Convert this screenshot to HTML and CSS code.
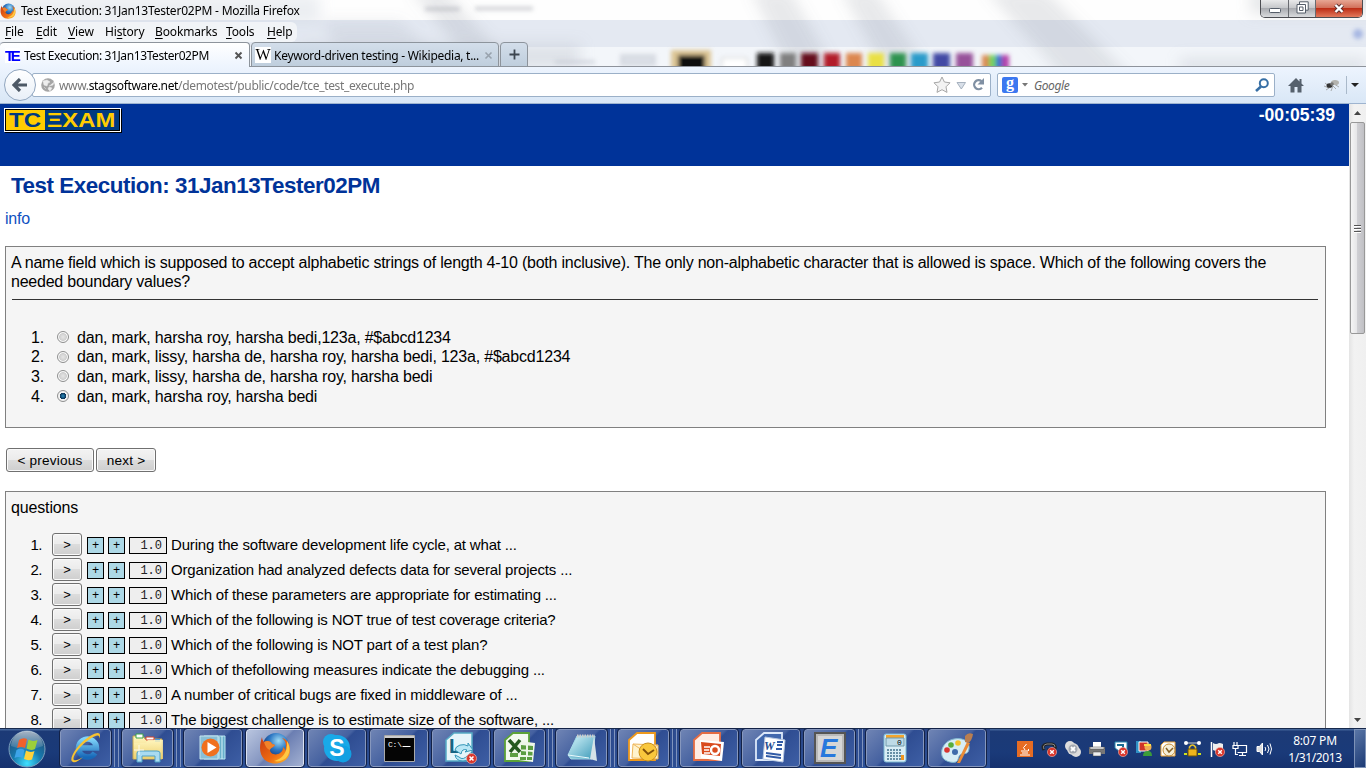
FILE: index.html
```html
<!DOCTYPE html>
<html lang="en">
<head>
<meta charset="utf-8">
<title>Test Execution: 31Jan13Tester02PM</title>
<link rel="stylesheet" href="styles.css">
</head>
<body>
<svg width="0" height="0" class="defs">
  <defs>
    <filter id="soft" x="-20%" y="-20%" width="140%" height="140%"><feGaussianBlur stdDeviation="2"/></filter>
    <filter id="softer" x="-20%" y="-50%" width="140%" height="200%"><feGaussianBlur stdDeviation="7"/></filter>
    <radialGradient id="globe" cx=".6" cy=".3" r=".7"><stop offset="0" stop-color="#9fdcf5"/><stop offset=".5" stop-color="#2d78c4"/><stop offset="1" stop-color="#12306f"/></radialGradient>
    <linearGradient id="fox" x1="0" y1="0" x2="1" y2="1"><stop offset="0" stop-color="#c83a12"/><stop offset=".6" stop-color="#ef6c12"/><stop offset="1" stop-color="#ffc22d"/></linearGradient>
    <radialGradient id="orb" cx=".5" cy=".9" r=".9"><stop offset="0" stop-color="#3fe0ff"/><stop offset=".45" stop-color="#1679ad"/><stop offset="1" stop-color="#26466f"/></radialGradient>
    <linearGradient id="shine" x1="0" y1="0" x2="0" y2="1"><stop offset="0" stop-color="#fff" stop-opacity=".6"/><stop offset="1" stop-color="#fff" stop-opacity=".08"/></linearGradient>
    <linearGradient id="folder" x1="0" y1="0" x2="0" y2="1"><stop offset="0" stop-color="#fff6bf"/><stop offset="1" stop-color="#edcf6c"/></linearGradient>
    <linearGradient id="ice" x1="0" y1="0" x2="1" y2="1"><stop offset="0" stop-color="#d8f6fb"/><stop offset="1" stop-color="#3d9ab9"/></linearGradient>
    <linearGradient id="ieblue" x1="0" y1="0" x2="0" y2="1"><stop offset="0" stop-color="#7fd4fa"/><stop offset="1" stop-color="#1768b8"/></linearGradient>
    <symbol id="firefox" viewBox="0 0 32 32">
      <circle cx="17" cy="14" r="13" fill="url(#globe)"/>
      <path d="M3 5c0 2 1 4 2 5C8 8 12 9 13 12l3 1c-1 2-5 3-5 5 0 4 6 6 10 3 3-2 3-4 3-6 2 1 2 3 2 4 2-5 1-10-3-13 5 1 8 6 8 12 0 8-6 13.500-15 13.500S1 25 1 16c0-4 1-8 2-11z" fill="url(#fox)"/>
      <path d="M28 9c4 6 3 13-1 17-4 3-8 4-12 3 8-2 14-8 13-20z" fill="#ffc843"/>
      <path d="M5 10c3-2 7-1 8 2l3 1c-1 2-5 3-5 5-3-1-5-4-6-8z" fill="#f0832b"/>
    </symbol>
    <symbol id="badx" viewBox="0 0 10 10"><circle cx="5" cy="5" r="4.600" fill="#d9372c" stroke="#f5b5ac" stroke-width=".6"/><path d="M3.200 3.200l3.600 3.600M6.800 3.200L3.200 6.800" stroke="#fff" stroke-width="1.400"/></symbol>
  </defs>
</svg>
<div class="desktop">
  <header class="chrome">
    <svg class="glass" width="1366" height="67" viewBox="0 0 1366 67">
      <rect width="1366" height="67" fill="#fefefe"/>
      <rect y="20" width="1366" height="28" fill="#e4e9f2"/>
      <rect y="47" width="1366" height="20" fill="#f3f6fa"/>
      <g filter="url(#softer)">
        <path d="M410-10h35l80 90h-40zM750-10h40l50 90h-45zM840-10h35l60 90h-45zM985-10h60l90 90h-70z" fill="#7b8490" opacity=".17"/>
        <path d="M320 20h80l50 50h-100z" fill="#7b8490" opacity=".12"/>
        <path d="M300 44h280v25H300zM1180 58h186v15h-186z" fill="#b0b6bf" opacity=".3"/>
        <path d="M0-5h320v30H0z" fill="#cbd2dc" opacity=".35"/>
        <path d="M1250-10h130v24h-130z" fill="#c4c8cd" opacity=".4"/>
      </g>
      <path d="M0 20.500h1366" stroke="#c9ccd0" stroke-width="2" opacity=".6" filter="url(#soft)"/>
      <g filter="url(#soft)">
        <path d="M425 9h35M475 8.500h58" stroke="#9fa3aa" stroke-width="4" opacity=".45"/>
        <path d="M555 62h40M622 56h32v8h-32z" stroke="#bcc2cb" fill="#c4cad4" stroke-width="4" opacity=".5"/>
        <path d="M671 50h40v22h-40z" fill="#dcc594"/><path d="M678 55h27v17h-27z" fill="#080808"/>
        <rect x="722" y="58" width="25" height="14" fill="#fff" stroke="#c8c8c8"/>
        <path d="M757 53h17v17h-17z" fill="#151515"/><path d="M780 53h16v17h-16z" fill="#808080"/><path d="M801 53h17v17h-17z" fill="#650c1d"/><path d="M824 53h16v17h-16z" fill="#b21f29"/><path d="M846 53h16v17h-16z" fill="#dc8750"/><path d="M868 53h16v17h-16z" fill="#e9e045"/><path d="M890 53h16v17h-16z" fill="#2d9350"/><path d="M911 53h17v17h-17z" fill="#2b9bca"/><path d="M933 53h17v17h-17z" fill="#4349a4"/><path d="M956 53h17v17h-17z" fill="#97519a"/>
        <path d="M982 55h8v15h-8z" fill="#d98b53"/><path d="M989 55h8v15h-8z" fill="#73d261"/><path d="M996 55h7v15h-7z" fill="#3770cf"/><path d="M1002 55h7v15h-7z" fill="#b43faa"/>
        <circle cx="1358" cy="34" r="5" fill="#8ba1dc" opacity=".7"/>
      </g>
    </svg>
    <div class="titlebar">
      <svg class="tficon" width="16" height="16"><use href="#firefox"/></svg>
      <span class="title ui">Test Execution: 31Jan13Tester02PM - Mozilla Firefox</span>
      <div class="winbtns">
        <span class="wb min"><svg width="12" height="6"><rect x=".5" y=".5" width="11" height="4" rx=".8" fill="#fff" stroke="#555d69"/></svg></span>
        <span class="wb max"><svg width="13" height="13"><path d="M3.500 3V.8h8.700v8.400H10" fill="#fff" stroke="#555d69"/><path d="M1 3.500h8.500v8.500H1z" fill="#fff" stroke="#555d69"/><path d="M3.500 6h3.500v3.500h-3.500z" fill="#fff" stroke="#555d69"/></svg></span>
        <span class="wb close"><svg width="12" height="11"><path d="M2.500 2l7 7M9.500 2l-7 7" stroke="#59302f" stroke-width="4"/><path d="M2.500 2l7 7M9.500 2l-7 7" stroke="#fff" stroke-width="2.400"/></svg></span>
      </div>
    </div>
    <nav class="menubar ui">
      <span class="m1"><u>F</u>ile</span><span class="m2"><u>E</u>dit</span><span class="m3"><u>V</u>iew</span><span class="m4">Hi<u>s</u>tory</span><span class="m5"><u>B</u>ookmarks</span><span class="m6"><u>T</u>ools</span><span class="m7"><u>H</u>elp</span>
    </nav>
    <div class="tabs ui">
      <div class="tab active"><span class="te">TE</span><span class="tabt t1">Test Execution: 31Jan13Tester02PM</span><svg class="x" width="9" height="9"><path d="M1.500 1.500l6 6M7.500 1.500l-6 6" stroke="#555" stroke-width="1.900"/></svg></div>
      <div class="tab second"><span class="wiki">W</span><span class="tabt t2">Keyword-driven testing - Wikipedia, t...</span><svg class="x" width="9" height="9"><path d="M1.500 1.500l6 6M7.500 1.500l-6 6" stroke="#98a2ad" stroke-width="1.600"/></svg></div>
      <div class="tab plus"><svg width="11" height="11"><path d="M5.500 .5v10M.5 5.500h10" stroke="#3d4650" stroke-width="1.800"/></svg></div>
    </div>
    <div class="navbar">
      <div class="back"><svg width="16" height="14" viewBox="0 0 16 14"><path d="M8 1L2 7l6 6M2.500 7H15" fill="none" stroke="#4d5966" stroke-width="3.200"/></svg></div>
      <div class="url">
        <svg width="14" height="14"><circle cx="7" cy="7" r="6.800" fill="#a5a5a5"/><path d="M2 3l4-1 3 2-2 1-1 3-3-1zM8 8l4-1 1-3M8 9l3 1-2 3-2-2zM3 9l2 2" fill="#eee" stroke="#eee" stroke-width=".5"/></svg>
        <span class="addr ui">www.<b>stagsoftware.net</b>/demotest/public/code/tce_test_execute.php</span>
        <svg class="urlend" width="56" height="20"><path d="M9 2l2.400 5 5.600.8-4 4 1 5.600-5-2.700-5 2.700 1-5.600-4-4 5.600-.8z" fill="#f3f3f3" stroke="#a7a7a7"/><path d="M24 7.500h8.500L28.300 14z" fill="#d8dfe8" stroke="#a6b1be"/><path d="M48.500 6.200a4.500 4.500 0 1 0 .5 6.500" fill="none" stroke="#8090a3" stroke-width="2.300"/><path d="M51 3v6.500h-6.500z" fill="#8090a3"/></svg>
      </div>
      <div class="search">
        <span class="goog">g</span><svg class="tri" width="6" height="4"><path d="M0 0h6L3 3.500z" fill="#777"/></svg><i class="gtext ui">Google</i>
        <svg width="14" height="14"><circle cx="8.800" cy="5.200" r="4" fill="none" stroke="#376fa5" stroke-width="2"/><path d="M6 8.500L1 13" stroke="#376fa5" stroke-width="2.600"/></svg>
      </div>
      <svg class="home" width="16" height="15"><path d="M8 0L0 8h2.500v6.500h4V9h3v5.500h4V8H16L13.500 5.400V1h-2v2.500z" fill="#56616d"/></svg>
      <svg class="bug" width="17" height="15"><path d="M1 8l5 2M2 5l5 4M3 12l6-4M8 13l2-5M13 11l-3-3M16 9l-5-3" stroke="#999" stroke-width=".8"/><ellipse cx="6.500" cy="7.500" rx="3" ry="2.300" fill="#333"/><ellipse cx="12" cy="4.500" rx="4" ry="2.600" fill="#b3b3af"/><circle cx="9" cy="6" r="1.800" fill="#777"/></svg>
      <span class="sep"></span>
      <svg class="drop" width="8" height="4"><path d="M0 0h8L4 4z" fill="#222"/></svg>
    </div>
  </header>

  <div class="viewport">
    <main class="page">
      <div class="bluebar">
        <div class="logo"><span class="tc"><b>TC</b></span><span class="exam"><b>&Xi;XAM</b></span></div>
        <div class="timer">-00:05:39</div>
      </div>
      <h1>Test Execution: 31Jan13Tester02PM</h1>
      <a class="info">info</a>
      <section class="box question">
        <p>A name field which is supposed to accept alphabetic strings of length 4-10 (both inclusive). The only non-alphabetic character that is allowed is space. Which of the following covers the<br>needed boundary values?</p>
        <div class="rule"></div>
        <ol class="answers">
          <li><span class="n">1.</span><span class="radio"></span>dan, mark, harsha roy, harsha bedi,123a, #$abcd1234</li>
          <li><span class="n">2.</span><span class="radio"></span>dan, mark, lissy, harsha de, harsha roy, harsha bedi, 123a, #$abcd1234</li>
          <li><span class="n">3.</span><span class="radio"></span>dan, mark, lissy, harsha de, harsha roy, harsha bedi</li>
          <li><span class="n">4.</span><span class="radio on"></span>dan, mark, harsha roy, harsha bedi</li>
        </ol>
      </section>
      <div class="pager"><button class="btn prev">&lt; previous</button><button class="btn next">next &gt;</button></div>
      <section class="box list">
        <div class="legend">questions</div>
        <ol class="questions">
          <li><span class="n">1.</span><button class="btn go">&gt;</button><span class="cell">+</span><span class="cell">+</span><span class="score">1.0</span><span>During the software development life cycle, at what ...</span></li>
          <li><span class="n">2.</span><button class="btn go">&gt;</button><span class="cell">+</span><span class="cell">+</span><span class="score">1.0</span><span>Organization had analyzed defects data for several projects ...</span></li>
          <li><span class="n">3.</span><button class="btn go">&gt;</button><span class="cell">+</span><span class="cell">+</span><span class="score">1.0</span><span>Which of these parameters are appropriate for estimating ...</span></li>
          <li><span class="n">4.</span><button class="btn go">&gt;</button><span class="cell">+</span><span class="cell">+</span><span class="score">1.0</span><span>Which of the following is NOT true of test coverage criteria?</span></li>
          <li><span class="n">5.</span><button class="btn go">&gt;</button><span class="cell">+</span><span class="cell">+</span><span class="score">1.0</span><span>Which of the following is NOT part of a test plan?</span></li>
          <li><span class="n">6.</span><button class="btn go">&gt;</button><span class="cell">+</span><span class="cell">+</span><span class="score">1.0</span><span>Which of thefollowing measures indicate the debugging ...</span></li>
          <li><span class="n">7.</span><button class="btn go">&gt;</button><span class="cell">+</span><span class="cell">+</span><span class="score">1.0</span><span>A number of critical bugs are fixed in middleware of ...</span></li>
          <li><span class="n">8.</span><button class="btn go">&gt;</button><span class="cell">+</span><span class="cell">+</span><span class="score">1.0</span><span>The biggest challenge is to estimate size of the software, ...</span></li>
        </ol>
      </section>
    </main>
    <aside class="scroll">
      <svg width="17" height="18"><path d="M5 11h7L8.500 7z" fill="#444"/></svg>
      <div class="thumb"><i></i><i></i><i></i></div>
      <svg class="down" width="17" height="17"><path d="M5 7h7l-3.500 4z" fill="#444"/></svg>
    </aside>
  </div>

  <footer class="taskbar">
    <div class="start"><svg width="40" height="40" viewBox="0 0 40 40"><circle cx="20" cy="20" r="18" fill="url(#orb)" stroke="#7fa0bd"/><path d="M4 17a16 15 0 0 1 32 0q-16 7-32 0z" fill="url(#shine)"/><path d="M12 11q4-3 8-1l-2 9q-4-2-8 0z" fill="#f0612b"/><path d="M21.500 10.500q4 2.500 9 .5l-2.500 9q-4 2-8.500-.5z" fill="#9bd03a"/><path d="M9.500 21q4-2.500 8 0l-2 8q-4-2-8 0z" fill="#3da4e8"/><path d="M19 21.500q4 2.500 8.500.5l-2.500 8.500q-4 1.500-8-.5z" fill="#ffd23b"/></svg></div>
    <div class="tasks">
      <div class="slot many"><div class="task"><svg width="34" height="32" viewBox="0 0 34 32"><path d="M26 21a9 9 0 1 1 1.500-5H12" fill="none" stroke="url(#ieblue)" stroke-width="5.500"/><path d="M4 30C-2 28 9 11 21 4c8-5 12-4 9 3 1-5-3-4-9 0C11 13 2 26 5 28c2 1 6-1 9-3-4 4-8 6-10 5z" fill="#f7c331"/></svg></div><i></i><i></i></div>
      <div class="slot many"><div class="task"><svg width="34" height="32" viewBox="0 0 34 32"><path d="M2 4h10l2 3h17v20H2z" fill="url(#folder)" stroke="#c9a94e"/><path d="M5 2h7v4H5z" fill="#fff" stroke="#3aa34a"/><path d="M15 5h8v3h-8z" fill="#fff" stroke="#d2452f"/><path d="M24 7h5v3h-5z" fill="#4b9be0"/><path d="M3 11h12l2-3h15v19H3z" fill="url(#folder)" opacity=".85"/><path d="M6 30V21q0-2 3-2h17q3 0 3 2v9h-5v-6H11v6z" fill="#a9dbf1" stroke="#4ea1c7"/><path d="M8 13v10M3 18h10" stroke="#fff" opacity=".8"/></svg></div><i></i><i></i></div>
      <div class="slot"><div class="task"><svg width="30" height="28" viewBox="0 0 30 28"><path d="M6 2h21v23H6z" fill="#68afcb" stroke="#b8e5f2"/><path d="M24 2v23M21 3v21" stroke="#d6f2fa"/><path d="M2 2h18v23H2z" fill="#89bfd6" stroke="#c5e5ef"/><circle cx="12.500" cy="13.500" r="9" fill="#f0701e"/><path d="M9.500 8v11l9-5.500z" fill="#fff"/></svg></div></div>
      <div class="slot"><div class="task lit"><svg width="32" height="32"><use href="#firefox"/></svg></div></div>
      <div class="slot"><div class="task"><svg width="32" height="32" viewBox="0 0 32 32"><circle cx="16" cy="16" r="13" fill="#19a9e8"/><circle cx="10" cy="10" r="8" fill="#19a9e8"/><circle cx="22" cy="22" r="8.500" fill="#12a0e2"/><text x="16" y="24" font-family="Liberation Sans" font-weight="bold" font-size="23" text-anchor="middle" fill="#fff">S</text></svg></div></div>
      <div class="slot"><div class="task"><svg width="31" height="27" viewBox="0 0 31 27"><path d="M.5.500h30v26H.5z" fill="#050505" stroke="#aaa"/><path d="M1 1h29v2H1z" fill="#ccc"/><text x="4" y="12" font-family="Liberation Mono" font-size="8" fill="#fff" textLength="14">C:\</text><path d="M18.500 11.500h8" stroke="#fff"/></svg></div></div>
      <div class="slot"><div class="task"><svg width="34" height="32" viewBox="0 0 34 32"><path d="M10 1h18v28H2V8z" fill="#e6f5fa" stroke="#56aac5" stroke-width="1.500"/><text x="5" y="21" font-size="20" font-weight="bold" font-family="Liberation Sans" fill="#176483">L</text><path d="M11 18a8 6 0 0 1 13-4v-3l5 7-8 2 2-2q-5-2-6 4zM28 20q0 9-9 9-7 0-8-6l4 2q4 4 9-2z" fill="#b9e7f6" stroke="#3697b8"/><use href="#badx" x="22" y="21" width="11" height="11"/></svg></div></div>
      <div class="slot many"><div class="task"><svg width="34" height="32" viewBox="0 0 34 32"><path d="M10 1h16v28H2V8z" fill="#f2faf0" stroke="#5ba238" stroke-width="1.800"/><path d="M8 8l24 3-2 19-22-3z" fill="#edf6e9"/><path d="M18 13l5 .5v4h-5zM25 13.500l5 .5v4h-5zM18 19l5 .5v3.500h-5zM25 19.500l4.500.5v3.500H25zM7 21h8v4H7zM17 25h6v3h-6zM24 25h5v3h-5z" fill="#5b9e42"/><path d="M6 8l11 12M17 8L7 20" stroke="#24591f" stroke-width="3.500"/></svg></div><i></i><i></i></div>
      <div class="slot many"><div class="task"><svg width="32" height="30" viewBox="0 0 32 30"><path d="M11 3h18l-3 23H5L2 22z" fill="url(#ice)" stroke="#a5dce9"/><path d="M28 3l3 25-7-2z" fill="#d6e2e7"/><path d="M11 3h18" stroke="#ccc" stroke-width="3" stroke-dasharray="1.500 1"/><path d="M2 22l21 3" stroke="#e8f8fb"/></svg></div><i></i><i></i></div>
      <div class="slot many"><div class="task"><svg width="34" height="32" viewBox="0 0 34 32"><path d="M10 1h18v27H2V8z" fill="#fff" stroke="#ed991d" stroke-width="1.800"/><path d="M6 12l25 1v14L5 26z" fill="#fff3cd" stroke="#efb65a"/><path d="M6 12l12 8 13-7" fill="none" stroke="#efb65a"/><circle cx="21" cy="20" r="9" fill="#f9c73d" stroke="#c98f1c"/><path d="M16 17l5 5 6-4" fill="none" stroke="#80510b" stroke-width="1.800"/></svg></div><i></i><i></i></div>
      <div class="slot"><div class="task"><svg width="34" height="32" viewBox="0 0 34 32"><path d="M10 1h18v27H2V8z" fill="#ffece2" stroke="#e46c42" stroke-width="1.800"/><path d="M8 8l24 2-2 19-21-3z" fill="#fff"/><path d="M9 10l20 2-1 12-18-2z" fill="#d94b1e"/><path d="M12 15h6M12 18h5M12 21h6" stroke="#fff" stroke-width="1.500"/><circle cx="23" cy="18" r="4" fill="none" stroke="#fff" stroke-width="2.500"/></svg></div></div>
      <div class="slot"><div class="task"><svg width="34" height="32" viewBox="0 0 34 32"><path d="M10 1h18v27H2V8z" fill="#4168ae" stroke="#dce8fa" stroke-width="1.800"/><path d="M11 5l20 3-2 22-20-3z" fill="#fff" stroke="#b7c8e2"/><text x="10" y="18" font-size="12" font-style="italic" font-weight="bold" font-family="Liberation Serif" fill="#244a91">W</text><path d="M23 10h6M23 13h5M22 17h6M12 21l15 2M12 24l15 2" stroke="#315ba6" stroke-width="1.800"/></svg></div></div>
      <div class="slot many"><div class="task"><svg width="32" height="32" viewBox="0 0 32 32"><path d="M1 1h30v30H1z" fill="#b9b9b9" stroke="#555" stroke-width="2"/><path d="M4 4h24v24H4z" fill="#d6d6d6"/><text x="6" y="25" font-size="26" font-style="italic" font-weight="bold" font-family="Liberation Sans" fill="#2878dd">E</text></svg></div><i></i><i></i></div>
      <div class="slot"><div class="task"><svg width="24" height="30" viewBox="0 0 24 30"><rect x="1" y="1" width="22" height="28" rx="2" fill="#d9edf5" stroke="#7db8d2"/><path d="M3 2h18v3H3z" fill="#f4a52e"/><path d="M3 5h18v8H3z" fill="#bedae6" stroke="#719aac"/><text x="14" y="12" font-size="8" font-family="Liberation Mono">0</text><path d="M4 17h15M4 20h15M4 23h15M4 26h15" stroke="#678fa6" stroke-width="1.800" stroke-dasharray="2 1"/><path d="M18 22h3v5h-3z" fill="#ef951e"/></svg></div></div>
      <div class="slot"><div class="task"><svg width="34" height="32" viewBox="0 0 34 32"><path d="M5 28C-2 23 2 9 14 7c11-2 16 4 15 10-1 7-6 3-9 6-2 2-1 5-4 7-3 1-8 0-11-2z" fill="#d6edf5" stroke="#80b6ce"/><circle cx="7" cy="18" r="2.800" fill="#d93630"/><circle cx="11" cy="13" r="2.800" fill="#58ad3b"/><circle cx="18" cy="11" r="2.800" fill="#f4c22b"/><circle cx="15" cy="20" r="3" fill="#3e6baa"/><path d="M17 31L27 10l3 1-10 20z" fill="#e98b36"/><path d="M25 4q3-4 8-2-1 7-5 9l-3-1z" fill="#b97e51"/></svg></div></div>
    </div>
    <div class="tray">
      <svg width="16" height="16"><path d="M0 0h16v16H0z" fill="#e66c23"/><path d="M8 9q-3-3 0-4l1.500-2M4 10h7q2-1 0-2M5 12h6M3 14h10" fill="none" stroke="#fff"/></svg>
      <svg width="17" height="16"><path d="M3 9q-3-5 3-6h5q4 1 3 5l-3 1H6" fill="none" stroke="#222" stroke-width="3"/><path d="M3 8q-2-4 3-5h5q3 0 3 3" fill="none" stroke="#888"/><use href="#badx" x="6" y="6" width="10" height="10"/></svg>
      <svg width="16" height="16"><circle cx="5" cy="5" r="5" fill="#ddd"/><circle cx="11" cy="11" r="5" fill="#ddd"/><circle cx="8" cy="8" r="6" fill="#d9d9d9"/><circle cx="8" cy="8" r="4.500" fill="#a3a8b0"/><path d="M6 6l4 4M10 6l-4 4" stroke="#fff" stroke-width="1.800"/></svg>
      <svg width="16" height="16"><path d="M4 1h8v5H4z" fill="#fff"/><path d="M0 6h16v7H0z" fill="#777"/><path d="M1 6h14v2H1zM4 11h8v4H4z" fill="#eee" stroke="#444" stroke-width=".5"/></svg>
      <svg width="16" height="16"><path d="M2 1h12v9H6L2 7z" fill="#fff" stroke="#2b88af"/><path d="M4 4h6v3" fill="none" stroke="#186c93" stroke-width="2"/><use href="#badx" x="5" y="6" width="10" height="10"/></svg>
      <svg width="16" height="16"><path d="M0 0h5v12H0z" fill="#2f91c4"/><path d="M3 1h9v9H3z" fill="#cf3429" stroke="#fff"/><circle cx="12" cy="6" r="3.500" fill="#efad53"/><path d="M7 15q0-5 5-5 4 0 4 5z" fill="#3c9d39"/><path d="M8 4h7" stroke="#ffdc46" stroke-width="2"/></svg>
      <svg width="16" height="16"><path d="M4 1h11v14H1V4z" fill="#fff" stroke="#eda63a"/><circle cx="9" cy="9" r="6" fill="#f6eed8" stroke="#c58b32"/><path d="M6 7l3 4 4-4" fill="none" stroke="#876225" stroke-width="1.500"/></svg>
      <svg width="17" height="16"><path d="M2 2h13" stroke="#ccc"/><circle cx="2" cy="2" r="2" fill="#fff"/><circle cx="15" cy="2" r="2" fill="#fff"/><path d="M5.500 9V6q3-4 6 0v3" fill="none" stroke="#e8c32c" stroke-width="1.600"/><path d="M4 8h9v7H4z" fill="#edb41d" stroke="#6c5209"/><path d="M0 13h3M14 13h3" stroke="#cde020" stroke-width="2"/></svg>
      <svg width="16" height="16"><path d="M2.500 1v15" stroke="#fff" stroke-width="1.500"/><path d="M4 2q3 2 6 0 2 0 4 1v7q-4-1-6 0-2 0-4-1z" fill="#eee"/><use href="#badx" x="6" y="6" width="10" height="10"/></svg>
      <svg width="16" height="16"><path d="M6.500 4.500h8v7h-9M7 14.500h7M10.500 12v2M2 1v3M5 1v3M1 4.500h5v3H1zM3.500 8v5.500H6" fill="none" stroke="#fff" stroke-width="1.200"/></svg>
      <svg width="16" height="16"><path d="M1 5.500h2.500L6.500 2v12l-3-3.500H1z" fill="#ddd" stroke="#fff"/><path d="M9 6q1.500 2 0 4M11.500 4q3 4 0 8M14 2.500q3 5.500 0 11" fill="none" stroke="#fff"/></svg>
    </div>
    <div class="clock ui"><span class="time">8:07 PM</span><span class="date">1/31/2013</span></div>
    <div class="peek"></div>
  </footer>
</div>
</body>
</html>
```
FILE: styles.css
```css
* { box-sizing: border-box; }
body { margin: 0; overflow: hidden; background: #fff; color: #000; font-family: "Liberation Sans", Arial, sans-serif; }
svg { flex: none; display: block; }
.defs { position: absolute; }
.ui { font-family: "Noto Sans", "Open Sans", sans-serif; font-size: 12px; white-space: nowrap; }
.desktop { width: 1366px; height: 768px; display: flex; flex-direction: column; overflow: hidden; }

.chrome { height: 104px; position: relative; display: flex; flex-direction: column; isolation: isolate; }
.glass { position: absolute; left: 0; top: 0; z-index: -1; }
.titlebar { height: 22px; display: flex; align-items: flex-start; }
.tficon { margin-top: 3px; }
.title { margin: 2px 0 0 5px; line-height: 17px; letter-spacing: -0.21px; }
.winbtns { margin: 0 3px 0 auto; width: 103px; height: 18px; display: flex; border: 1px solid #4c4d52; border-top: 0; border-radius: 0 0 5px 5px; overflow: hidden; }
.wb { display: flex; align-items: center; justify-content: center; background: linear-gradient(#e9e9ea, #c6c8cb 45%, #a9abb0 50%, #d9dadd); border-right: 1px solid #696b70; }
.min { width: 28px; padding-top: 4px; }
.max { width: 27px; padding-bottom: 2px; }
.close { flex: 1; border: 0; background: linear-gradient(#e7a693, #d2715b 45%, #bd2e16 50%, #e3795c); }
.menubar { height: 20px; width: 297px; display: flex; padding-left: 5px; line-height: 20px; background: rgba(247,248,250,.75); border-radius: 0 6px 6px 0; }
.menubar span { flex: none; letter-spacing: -0.15px; }
.menubar u { text-underline-offset: 2px; }
.m1 { width: 31px; } .m2 { width: 32px; } .m3 { width: 37px; } .m4 { width: 50px; } .m5 { width: 71px; } .m6 { width: 41px; }
.tabs { height: 25px; display: flex; gap: 1px; border-bottom: 1px solid #8e939b; }
.tab { height: 25px; display: flex; align-items: center; border: 1px solid #8d949c; border-radius: 4px 4px 0 0; background: linear-gradient(#d3deea, #bfcedd); }
.active { height: 25px; width: 250px; border-left: 0; border-bottom: 0; padding: 0 6px 0 5px; background: linear-gradient(#fff, #edf4fe); }
.second { width: 248px; padding: 1px 5px 0 3px; }
.plus { width: 28px; justify-content: center; }
.tab .x { margin-left: auto; }
.te { width: 15px; height: 15px; background: #fff; color: #00f; font: bold 15px/15px "Liberation Sans", Arial, sans-serif; letter-spacing: -3.5px; white-space: nowrap; }
.wiki { width: 16px; height: 16px; background: #fff; font: 16px/16px "Liberation Serif", serif; text-align: center; }
.tabt { margin-left: 4px; }
.t1 { letter-spacing: -0.4px; }
.t2 { margin-left: 3px; letter-spacing: -0.28px; }
.navbar { height: 37px; display: flex; align-items: center; padding: 0 7px 0 4px; background: linear-gradient(#edf4fe, #d9e7f6); border-bottom: 1px solid #9eb4cf; }
.back { width: 32px; height: 32px; flex: none; border: 1px solid #91a6bf; border-radius: 50%; background: linear-gradient(#fff, #e8eff8); display: flex; align-items: center; justify-content: center; z-index: 1; }
.url { margin-left: -4px; width: 959px; flex: none; height: 24px; padding: 0 1px 0 8px; border: 1px solid #9bb0c8; border-radius: 2px; background: #fff; display: flex; align-items: center; }
.addr { margin-left: 4px; color: #777; letter-spacing: -0.35px; }
.addr b { font-weight: 400; color: #000; }
.urlend { margin-left: auto; }
.search { margin-left: 6px; width: 278px; flex: none; height: 24px; padding: 0 5px 0 4px; border: 1px solid #9bb0c8; border-radius: 2px; background: #fff; display: flex; align-items: center; }
.search > svg:last-child { margin-left: auto; }
.goog { width: 16px; height: 16px; background: #3c78f0; color: #fff; border-radius: 2px; font: bold 16px/12px "Liberation Serif", serif; text-align: center; }
.tri { margin-left: 4px; }
.gtext { margin-left: 6px; color: #666; letter-spacing: -0.4px; }
.home { margin-left: 13px; }
.bug { margin-left: 19px; }
.sep { margin-left: 6px; width: 1px; height: 18px; background: #a9b9ca; }
.drop { margin-left: 4px; }

.viewport { height: 624px; display: flex; overflow: hidden; }
.page { width: 1349px; height: 624px; overflow: hidden; background: #fff; }
.bluebar { height: 62px; background: #039; display: flex; justify-content: space-between; padding: 4px 14px 0 4px; }
.logo { width: 117px; height: 24px; border: 1px solid #fff; box-shadow: 1px 1px #000; display: flex; padding: 1px; background: #000; color: #fc0; }
.tc, .exam { height: 20px; display: flex; align-items: center; }
.tc { width: 39px; background: #fc0; color: #003a80; padding-left: 3px; }
.exam { flex: 1; background: #003a80; padding-left: 2px; }
.logo b { font: bold 20px/20px "Liberation Sans", Arial, sans-serif; transform-origin: 0 50%; }
.tc b { transform: scaleX(1.2); }
.exam b { transform: scaleX(1.19); }
.timer { color: #fff; font-size: 17.600px; line-height: 15px; font-weight: 700; }
h1 { margin: 7px 0 0 11px; font-size: 22.400px; line-height: 26px; letter-spacing: -0.45px; color: #039; white-space: nowrap; }
.info { display: block; margin: 10px 0 0 5px; font-size: 16px; line-height: 19px; letter-spacing: -0.2px; color: #0f51c1; }
.box { margin-left: 5px; width: 1321px; border: 1px solid #808080; background: #f5f5f5; }
.question { margin-top: 18px; height: 182px; padding: 6px 7px 0 5px; font-size: 16px; }
.box p { margin: 0; line-height: 19px; letter-spacing: -0.232px; white-space: nowrap; }
.rule { margin: 8px 0 0 1px; height: 1px; background: #333; }
ol { list-style: none; margin: 0; padding: 0; }
.answers { margin-top: 28px; }
.answers li { height: 19.600px; line-height: 20px; display: flex; align-items: center; letter-spacing: -0.2px; white-space: nowrap; }
.n { width: 33px; text-align: right; flex: none; font-size: 16px; }
.radio { margin: 0 8px 1px 13px; width: 12px; height: 12px; flex: none; border: 1px solid #8e8f8f; border-radius: 50%; background: radial-gradient(#e5e5e5, #cfcfcf 50%, #f8f8f8 60%); }
.on { background: radial-gradient(circle at 50% 50%, #2c8fc1 0, #0b3356 42%, #f2f2f2 48%); }
.pager { margin: 20px 0 0 6px; display: flex; gap: 2px; }
.btn { height: 23.500px; padding: 0; border: 1px solid #707070; border-radius: 3px; box-shadow: inset 0 0 0 1px #fafafa; background: linear-gradient(#f3f3f3, #ebebeb 50%, #dcdcdc 50%, #cecece); font: 13.600px/20px "Liberation Sans", Arial, sans-serif; color: #000; }
.prev, .next { letter-spacing: 0.2px; padding-top: 2px; }
.prev { width: 88px; } .next { width: 60px; }
.list { margin-top: 19.500px; height: 260px; padding: 6px 0 0 5px; }
.legend { font-size: 16px; line-height: 19px; letter-spacing: -0.15px; }
.questions { margin-top: 15px; }
.questions li { height: 25px; display: flex; align-items: center; font-size: 15px; letter-spacing: -0.17px; white-space: nowrap; }
.questions .n { width: 31px; font-size: 15px; letter-spacing: -0.5px; }
.go { width: 30px; margin: 0 5px 0 10px; font-size: 13px; }
.cell, .score { height: 17px; border: 1px solid #000; flex: none; margin-top: 1px; margin-right: 4px; font: 12px/17px "Liberation Mono", monospace; letter-spacing: 0; }
.cell { width: 17px; text-align: center; background: #add8e6; }
.score { width: 38px; padding-right: 4px; text-align: right; background: #eee; color: #222; }

.scroll { width: 17px; background: linear-gradient(90deg, #e4e4e4, #f2f2f2 30%, #f0f0f0); display: flex; flex-direction: column; }
.thumb { margin-left: 1px; width: 15px; height: 212px; border: 1px solid #989898; border-radius: 2px; background: linear-gradient(90deg, #f5f5f5, #e6e6e8 45%, #cfcfd3 50%, #c0c0c4); display: flex; flex-direction: column; align-items: center; justify-content: center; gap: 2px; }
.thumb i { width: 7px; height: 1px; background: #555; box-shadow: 0 1px #fff; }
.down { margin-top: auto; }

.taskbar { height: 40px; display: flex; align-items: stretch; border-top: 1px solid #17294c; background: linear-gradient(#4e71a4, #1c3a76 6%, #1a3a79 60%, #16326e); }
.start { width: 60px; padding-left: 7px; flex: none; }
.tasks { display: flex; width: 930px; flex: none; background: linear-gradient(#2a4586, #2b5097); }
.slot { width: 62px; display: flex; gap: 1px; padding-right: 4px; }
.task { flex: 1; height: 38px; display: flex; align-items: center; justify-content: center; border: 1px solid #8697bd; border-radius: 3px; outline: 1px solid #132247; background: linear-gradient(135deg, #6f84b4 0, #4561a0 48%, #2f4d92 52%, #3e5fa5); }
.lit { background: linear-gradient(135deg, #b9c5df, #8596c1 48%, #6b7eb2 52%, #a3b1d2); border-color: #dbe2f1; }
.many { padding-right: 3px; }
.slot > i { width: 3px; height: 38px; border-right: 1px solid #8094be; background: #2e4d91; }
.tray { display: flex; align-items: center; width: 286px; padding-left: 27px; gap: 7.700px; flex: none; }
.clock { width: 78px; flex: none; color: #fff; display: flex; flex-direction: column; align-items: center; padding-top: 3px; line-height: 17px; }
.time { letter-spacing: -0.2px; } .date { letter-spacing: -0.4px; }
.peek { width: 12px; flex: none; border: 1px solid #7d92b7; background: linear-gradient(135deg, #5a76a6, #1c3a75); }
```
